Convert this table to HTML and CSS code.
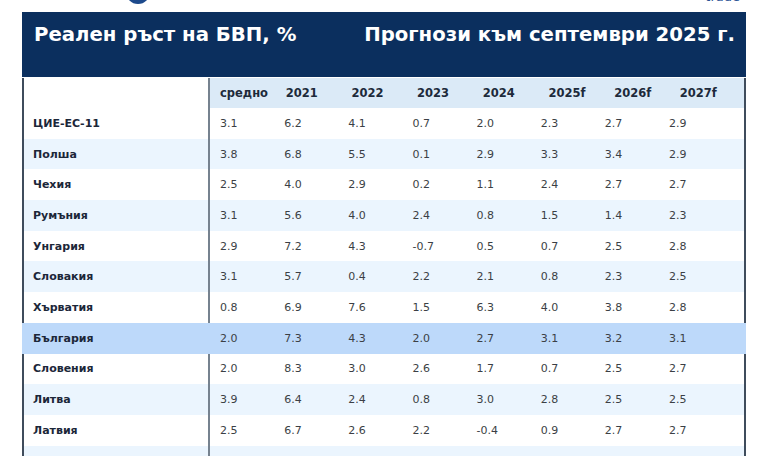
FILE: index.html
```html
<!DOCTYPE html>
<html lang="bg">
<head>
<meta charset="utf-8">
<link rel="stylesheet" href="styles.css">
</head>
<body>
<div class="topbar">
  <span class="logo"></span>
  <span class="brand">trade</span>
</div>
<div class="panel">
  <div class="title">
    <h1>Реален ръст на БВП, %</h1>
    <h2>Прогнози към септември 2025 г.</h2>
  </div>
  <div class="thead">
    <div class="hc lab"></div>
    <div class="hc">средно</div>
    <div class="hc">2021</div>
    <div class="hc">2022</div>
    <div class="hc">2023</div>
    <div class="hc">2024</div>
    <div class="hc">2025f</div>
    <div class="hc">2026f</div>
    <div class="hc last">2027f</div>
  </div>
  <div class="row"><div class="c lab">ЦИЕ-ЕС-11</div><div class="c">3.1</div><div class="c">6.2</div><div class="c">4.1</div><div class="c">0.7</div><div class="c">2.0</div><div class="c">2.3</div><div class="c">2.7</div><div class="c last">2.9</div></div>
  <div class="row alt"><div class="c lab">Полша</div><div class="c">3.8</div><div class="c">6.8</div><div class="c">5.5</div><div class="c">0.1</div><div class="c">2.9</div><div class="c">3.3</div><div class="c">3.4</div><div class="c last">2.9</div></div>
  <div class="row"><div class="c lab">Чехия</div><div class="c">2.5</div><div class="c">4.0</div><div class="c">2.9</div><div class="c">0.2</div><div class="c">1.1</div><div class="c">2.4</div><div class="c">2.7</div><div class="c last">2.7</div></div>
  <div class="row alt"><div class="c lab">Румъния</div><div class="c">3.1</div><div class="c">5.6</div><div class="c">4.0</div><div class="c">2.4</div><div class="c">0.8</div><div class="c">1.5</div><div class="c">1.4</div><div class="c last">2.3</div></div>
  <div class="row"><div class="c lab">Унгария</div><div class="c">2.9</div><div class="c">7.2</div><div class="c">4.3</div><div class="c">-0.7</div><div class="c">0.5</div><div class="c">0.7</div><div class="c">2.5</div><div class="c last">2.8</div></div>
  <div class="row alt"><div class="c lab">Словакия</div><div class="c">3.1</div><div class="c">5.7</div><div class="c">0.4</div><div class="c">2.2</div><div class="c">2.1</div><div class="c">0.8</div><div class="c">2.3</div><div class="c last">2.5</div></div>
  <div class="row"><div class="c lab">Хърватия</div><div class="c">0.8</div><div class="c">6.9</div><div class="c">7.6</div><div class="c">1.5</div><div class="c">6.3</div><div class="c">4.0</div><div class="c">3.8</div><div class="c last">2.8</div></div>
  <div class="row hl"><div class="c lab">България</div><div class="c">2.0</div><div class="c">7.3</div><div class="c">4.3</div><div class="c">2.0</div><div class="c">2.7</div><div class="c">3.1</div><div class="c">3.2</div><div class="c last">3.1</div></div>
  <div class="row"><div class="c lab">Словения</div><div class="c">2.0</div><div class="c">8.3</div><div class="c">3.0</div><div class="c">2.6</div><div class="c">1.7</div><div class="c">0.7</div><div class="c">2.5</div><div class="c last">2.7</div></div>
  <div class="row alt"><div class="c lab">Литва</div><div class="c">3.9</div><div class="c">6.4</div><div class="c">2.4</div><div class="c">0.8</div><div class="c">3.0</div><div class="c">2.8</div><div class="c">2.5</div><div class="c last">2.5</div></div>
  <div class="row"><div class="c lab">Латвия</div><div class="c">2.5</div><div class="c">6.7</div><div class="c">2.6</div><div class="c">2.2</div><div class="c">-0.4</div><div class="c">0.9</div><div class="c">2.7</div><div class="c last">2.7</div></div>
  <div class="row alt"><div class="c lab"></div><div class="c"></div><div class="c"></div><div class="c"></div><div class="c"></div><div class="c"></div><div class="c"></div><div class="c"></div><div class="c last"></div></div>
</div>
</body>
</html>
```
FILE: styles.css
```css
html, body {
  margin: 0;
  padding: 0;
  background: #ffffff;
  overflow: hidden;
}
body {
  font-family: "DejaVu Sans", sans-serif;
  width: 768px;
  height: 456px;
}
.topbar {
  height: 12px;
  overflow: hidden;
  display: flex;
  align-items: flex-start;
}
.logo {
  display: block;
  width: 24px;
  height: 24px;
  border-radius: 50%;
  background: #1d4a8c;
  margin-left: 126px;
  margin-top: -20px;
}
.brand {
  margin-left: auto;
  margin-right: 28px;
  margin-top: -11px;
  font-size: 13px;
  line-height: 15px;
  color: #2c5596;
}
.panel {
  margin-left: 22px;
  width: 724px;
}
.title {
  background: #0b2f5e;
  height: 65px;
  box-sizing: border-box;
  padding: 11px 11px 0 12px;
  display: flex;
  justify-content: space-between;
  align-items: flex-start;
}
.title h1, .title h2 {
  margin: 0;
  font-size: 19.7px;
  line-height: 24px;
  font-weight: bold;
  color: #ffffff;
}
.thead {
  margin-top: 1px;
  display: grid;
  grid-template-columns: 188px repeat(7, 65.7px) 1fr;
  height: 30px;
}
.hc {
  background: #dbeaf7;
  display: flex;
  align-items: center;
  padding-left: 10px;
  font-size: 11.5px;
  font-weight: bold;
  color: #1d2a3b;
}
.hc.lab, .c.lab {
  background: #ffffff;
  border-left: 2px solid #3f4c5c;
  border-right: 2px solid #76828f;
  padding-left: 9px;
}
.hc.last, .c.last {
  border-right: 2px solid #3f4c5c;
}
.row {
  display: grid;
  grid-template-columns: 188px repeat(7, 64.15px) 1fr;
  height: 30.7px;
  background: #ffffff;
}
.row.alt {
  background: #ebf5fe;
}
.row.alt .c.lab {
  background: #ebf5fe;
}
.c {
  display: flex;
  align-items: center;
  padding-left: 10px;
  font-size: 11px;
  color: #3b3f45;
}
.c.lab {
  font-weight: bold;
  color: #1c2739;
}
.row.hl {
  background: #bdd9fa;
}
.row.hl .c.lab {
  background: #bdd9fa;
  border-left-color: #bdd9fa;
  border-right-color: #bdd9fa;
}
.row.hl .c.last {
  border-right-color: #bdd9fa;
}
.hc, .c {
  box-sizing: border-box;
}
```
